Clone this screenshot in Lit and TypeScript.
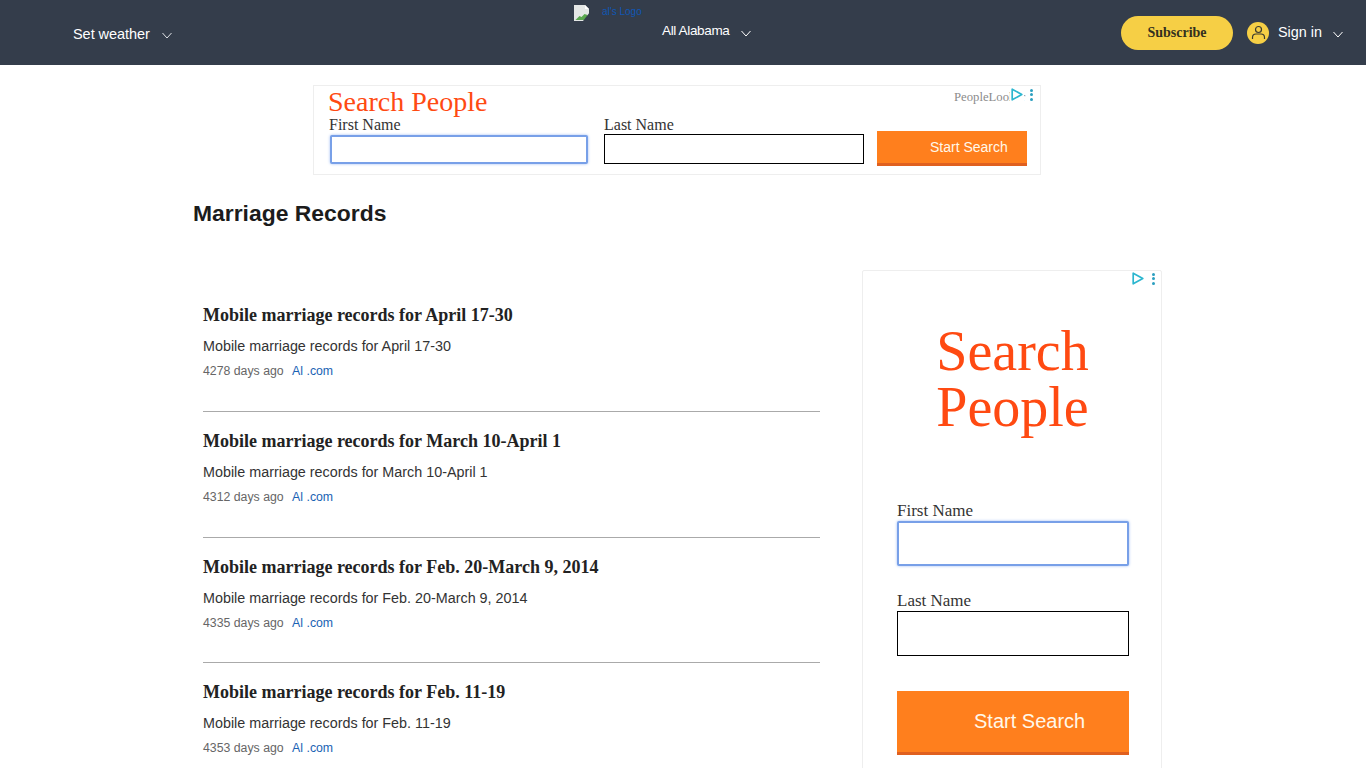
import { LitElement, html, css, svg } from 'lit';
import { customElement } from 'lit/decorators.js';

interface RecordItem {
  title: string;
  age: string;
}

const RECORDS: RecordItem[] = [
  { title: 'Mobile marriage records for April 17-30', age: '4278 days ago' },
  { title: 'Mobile marriage records for March 10-April 1', age: '4312 days ago' },
  { title: 'Mobile marriage records for Feb. 20-March 9, 2014', age: '4335 days ago' },
  { title: 'Mobile marriage records for Feb. 11-19', age: '4353 days ago' },
];

const chevron = () => html`<svg width="10" height="7" viewBox="0 0 10 7" fill="none" stroke="currentColor" stroke-width="1"><path d="M.5 1 5 6 9.5 1" /></svg>`;

// the little "ad choices" triangle, same in both ads
const adChoices = svg`<path d="M1.2 1.2v10.600l9.600-5.300z" fill="none" stroke="#2bb6cf" stroke-width="1.7" stroke-linejoin="round" />`;

@customElement('app-root')
export class AppRoot extends LitElement {
  static styles = css`
    :host {
      display: block;
      height: 768px;
      overflow: hidden;
      background: #fff;
      font-family: 'Liberation Sans', Arial, sans-serif;
      color: #222;
    }
    .header {
      height: 65px;
      background: #343d4b;
      display: flex;
      color: #fff;
    }
    .weather {
      width: 574px;
      box-sizing: border-box;
      padding: 26px 0 0 73px;
      font-size: 14.5px;
      line-height: 16px;
      letter-spacing: -0.05px;
    }
    .weather svg {
      margin-left: 8px;
      color: #dfe2e6;
    }
    .center {
      width: 547px;
    }
    .logo {
      display: flex;
      padding-top: 5px;
      height: 16px;
      font-size: 10px;
      line-height: 14px;
      color: #0f57b5;
    }
    .logo span {
      margin-left: 12px;
    }
    .region {
      margin: 2px 0 0 88px;
      font-size: 13.5px;
      line-height: 16px;
      letter-spacing: -0.35px;
    }
    .region svg {
      margin-left: 8px;
      position: relative;
      top: 2px;
    }
    .account {
      display: flex;
      align-items: center;
      height: 65px;
    }
    .subscribe {
      width: 112px;
      height: 34px;
      border-radius: 17px;
      background: #f6cf45;
      color: #33301f;
      font: bold 14px/33px 'Liberation Serif', serif;
      text-align: center;
    }
    .avatar {
      width: 22px;
      height: 22px;
      margin-left: 14px;
      border-radius: 50%;
      background: #f6cf45;
      display: flex;
      align-items: center;
      justify-content: center;
    }
    .signin {
      margin: 0 0 2px 9px;
      font-size: 14.4px;
    }
    .account > svg {
      margin-left: 11px;
      position: relative;
      top: 2px;
    }
    .ad-top {
      position: relative;
      width: 726px;
      height: 88px;
      margin: 20px 0 0 313px;
      border: 1px solid #eeeeee;
      font-family: 'Liberation Serif', serif;
      color: #333;
    }
    .ad-top h3 {
      margin: 0;
      padding: 0 0 0 14px;
      height: 30px;
      font-weight: 400;
      font-size: 28px;
      line-height: 31px;
      color: #ff4a12;
    }
    .ad-row {
      display: flex;
      padding-left: 15px;
      font-size: 16px;
    }
    .field {
      display: flex;
      flex-direction: column;
      line-height: 18px;
    }
    .field.first {
      width: 275px;
    }
    .field.last {
      width: 273px;
    }
    .input {
      box-sizing: border-box;
      height: 30px;
      border: 1px solid #000;
      background: #fff;
    }
    .input.focus {
      border: 2px solid #78a0e8;
      border-radius: 2px;
      box-shadow: 0 0 3px #9fbcf2;
    }
    .first .input {
      width: 258px;
      height: 29px;
      margin: 1px 0 0 1px;
    }
    .last .input {
      width: 260px;
    }
    .cta {
      box-sizing: border-box;
      background: #ff7f1d;
      border-bottom: 3px solid #e0601f;
      color: #fff8ea;
      font-family: 'Liberation Sans', Arial, sans-serif;
    }
    .ad-top .cta {
      width: 150px;
      height: 35px;
      margin-top: 15px;
      padding-left: 53px;
      font-size: 14px;
      line-height: 32px;
    }
    .source {
      position: absolute;
      top: 4px;
      left: 640px;
      white-space: nowrap;
      font-size: 12.7px;
      line-height: 14px;
      color: #8b8b8b;
    }
    .choices {
      position: absolute;
      display: flex;
      align-items: center;
    }
    .ad-top .choices {
      top: 2px;
      right: 7px;
      gap: 7px;
    }
    .ad-top .choices svg {
      background: #fff;
      outline: 1px solid #fff;
    }
    .dots {
      display: flex;
      flex-direction: column;
      gap: 1.500px;
    }
    .dots i {
      width: 3px;
      height: 3px;
      border-radius: 50%;
      background: #2b9fc0;
    }
    .title {
      margin: 25px 0 0 193px;
      font-size: 22.9px;
      line-height: 26px;
      font-weight: 700;
      color: #1c1c1c;
    }
    .content {
      display: flex;
      margin: 44px 0 0 193px;
    }
    .list {
      width: 617px;
      padding: 35px 10px 0;
    }
    .item {
      height: 106px;
    }
    .item:nth-child(5) {
      height: 105px;
    }
    .item h4 {
      margin: 0;
      font: 700 18px/20px 'Liberation Serif', serif;
      color: #222;
    }
    .item p {
      margin: 13px 0 0;
      font-size: 14.35px;
      line-height: 16px;
      color: #333;
    }
    .meta {
      margin-top: 10px;
      font-size: 12.3px;
      line-height: 14px;
      color: #666;
    }
    .meta a {
      margin-left: 5px;
      color: #1a63b4;
    }
    .rule {
      height: 1px;
      background: #aaa;
      margin-bottom: 19px;
    }
    .ad-side {
      position: relative;
      box-sizing: border-box;
      width: 300px;
      height: 600px;
      margin-left: 32px;
      padding: 52px 33px 0 34px;
      border: 1px solid #eeeeee;
      border-radius: 2px;
      font-family: 'Liberation Serif', serif;
      color: #333;
    }
    .ad-side .choices {
      top: 1px;
      right: 6px;
      gap: 8px;
    }
    .ad-side h3 {
      margin: 0;
      height: 179px;
      font-weight: 400;
      font-size: 56px;
      line-height: 56px;
      text-align: center;
      color: #ff4a12;
    }
    .ad-side .label {
      font-size: 17px;
      line-height: 17px;
      margin-bottom: 2px;
    }
    .ad-side .input {
      width: 232px;
      height: 45px;
    }
    .ad-side .gap {
      margin-top: 26px;
    }
    .ad-side .cta {
      width: 232px;
      height: 64px;
      margin-top: 35px;
      padding-left: 77px;
      font-size: 20px;
      line-height: 60px;
    }
  `;

  render() {
    return html`
      <div class="header">
        <div class="weather">Set weather ${chevron()}</div>
        <div class="center">
          <div class="logo">
            <svg width="16" height="16" viewBox="0 0 16 16">
              <path d="M0 0h11l4 4v12H0z" fill="#e4e7e6" />
              <path d="M11 0l4 4h-4z" fill="#fff" />
              <path d="M1.500 15l4-4 2 1 3-3 3 1v5z" fill="#5aa84f" />
              <path d="M9 16l7-9v9z" fill="#343d4b" />
            </svg>
            <span>al's Logo</span>
          </div>
          <div class="region">All Alabama ${chevron()}</div>
        </div>
        <div class="account">
          <div class="subscribe">Subscribe</div>
          <div class="avatar">
            <svg width="15" height="15" viewBox="0 0 15 15" fill="none" stroke="#3a3a30" stroke-width="1.2">
              <circle cx="7.500" cy="4.500" r="3" />
              <path d="M1.500 14v-1.500c0-2 1.500-3.500 3.500-3.500h5c2 0 3.500 1.500 3.500 3.500V14" />
            </svg>
          </div>
          <span class="signin">Sign in</span>
          ${chevron()}
        </div>
      </div>

      <div class="ad-top">
        <h3>Search People</h3>
        <div class="ad-row">
          <div class="field first">First Name<div class="input focus"></div></div>
          <div class="field last">Last Name<div class="input"></div></div>
          <div class="cta">Start Search</div>
        </div>
        <div class="source">PeopleLooker</div>
        <div class="choices">
          <svg width="12" height="13" viewBox="0 0 12 13">${adChoices}</svg>
          <div class="dots"><i></i><i></i><i></i></div>
        </div>
      </div>

      <div class="title">Marriage Records</div>

      <div class="content">
        <div class="list">
          ${RECORDS.map((r, i) => html`
            ${i > 0 ? html`<div class="rule"></div>` : ''}
            <div class="item">
              <h4>${r.title}</h4>
              <p>${r.title}</p>
              <div class="meta">${r.age} <a>Al .com</a></div>
            </div>
          `)}
        </div>
        <div class="ad-side">
          <div class="choices">
            <svg width="12" height="13" viewBox="0 0 12 13">${adChoices}</svg>
            <div class="dots"><i></i><i></i><i></i></div>
          </div>
          <h3>Search<br />People</h3>
          <div class="label">First Name</div>
          <div class="input focus"></div>
          <div class="label gap">Last Name</div>
          <div class="input"></div>
          <div class="cta">Start Search</div>
        </div>
      </div>
    `;
  }
}
